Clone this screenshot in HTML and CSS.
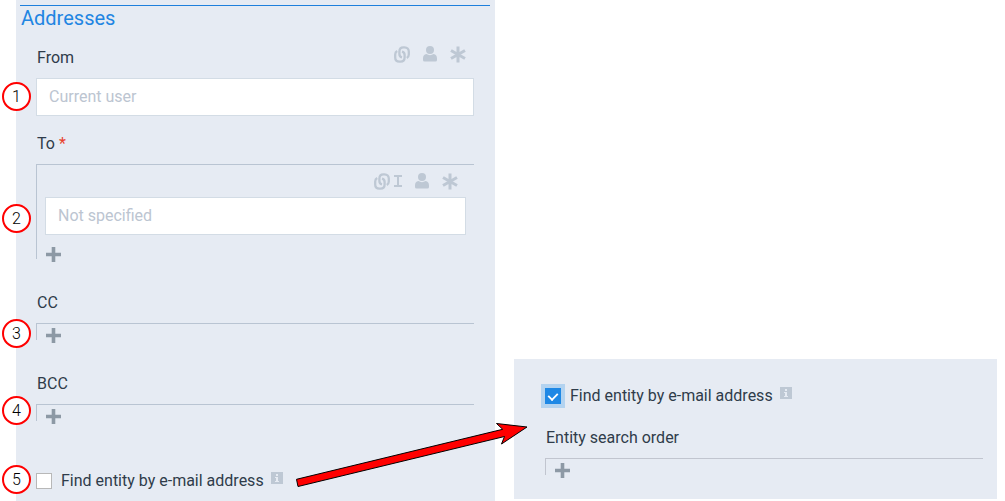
FILE: index.html
```html
<!DOCTYPE html>
<html lang="en">
<head>
<meta charset="utf-8">
<meta name="viewport" content="width=device-width, initial-scale=1">
<title>Addresses</title>
<link rel="stylesheet" href="styles.css">
</head>
<body>
<svg class="sprite" aria-hidden="true">
  <symbol id="link" viewBox="0 0 16 17">
    <g fill="none" stroke="currentColor" stroke-width="2.3">
      <path d="M3.200 5C1.800 5.800 1.200 7 1.200 8.500V11.500C1.200 14 2.800 15.700 5.500 15.700H6.500C9.200 15.700 10.600 14 10.600 11.500V9C10.600 7 9.800 6 8 5.600"/>
      <path d="M12.800 12C14.200 11.200 14.800 10 14.800 8.500V5.500C14.800 3 13.200 1.300 10.500 1.300H9.500C6.800 1.300 5.400 3 5.400 5.500V8C5.400 10 6.200 11 8 11.400"/>
    </g>
  </symbol>
  <symbol id="person" viewBox="0 0 14 16">
    <circle cx="7" cy="4" r="4" fill="currentColor"/>
    <path d="M3.500 8C5.500 9.500 8.500 9.500 10.500 8C13 8.500 14 10 14 12.500V14Q14 15.500 12.500 15.500H1.500Q0 15.500 0 14V12.500C0 10 1 8.500 3.500 8Z" fill="currentColor"/>
  </symbol>
  <symbol id="asterisk" viewBox="0 0 16 17">
    <path d="M8 .5V16.500M1 4.500L15 12.500M15 4.500L1 12.500" stroke="currentColor" stroke-width="3"/>
  </symbol>
  <symbol id="cursor" viewBox="0 0 8 12">
    <path d="M0 1H8M0 11H8M4 1V11" stroke="currentColor" stroke-width="2"/>
  </symbol>
  <symbol id="plus" viewBox="0 0 15 15">
    <path d="M7.500 0V15M0 7.500H15" stroke="currentColor" stroke-width="3.600"/>
  </symbol>
  <symbol id="info" viewBox="0 0 12 12">
    <rect width="12" height="12" fill="currentColor"/>
    <path d="M5 2H7V4H5ZM4 5H7V9H8V10H4V9H5V6H4Z" fill="#e6ebf3"/>
  </symbol>
</svg>

<main class="page">
  <section class="panel panel-main">
    <h1 class="title">Addresses</h1>

    <div class="field">
      <div class="field-head">
        <label class="label" for="from">From</label>
        <div class="tools">
          <button class="tool" type="button" aria-label="Link"><svg class="icon-large"><use href="#link"/></svg></button>
          <button class="tool" type="button" aria-label="User"><svg class="icon-person"><use href="#person"/></svg></button>
          <button class="tool" type="button" aria-label="Any"><svg class="icon-large"><use href="#asterisk"/></svg></button>
        </div>
      </div>
      <input class="text-box" id="from" type="text" placeholder="Current user">
    </div>

    <div class="field">
      <label class="label" for="to">To <span class="required">*</span></label>
      <div class="group">
        <div class="group-body">
          <div class="tools">
            <button class="tool" type="button" aria-label="Link to text"><svg class="icon-large"><use href="#link"/></svg><svg class="icon-cursor"><use href="#cursor"/></svg></button>
            <button class="tool" type="button" aria-label="User"><svg class="icon-person"><use href="#person"/></svg></button>
            <button class="tool" type="button" aria-label="Any"><svg class="icon-large"><use href="#asterisk"/></svg></button>
          </div>
          <input class="text-box" id="to" type="text" placeholder="Not specified">
        </div>
        <button class="add" type="button" aria-label="Add recipient"><svg class="icon-plus"><use href="#plus"/></svg></button>
      </div>
    </div>

    <div class="field field-spaced">
      <span class="label">CC</span>
      <div class="group">
        <button class="add" type="button" aria-label="Add CC"><svg class="icon-plus"><use href="#plus"/></svg></button>
      </div>
    </div>

    <div class="field field-spaced">
      <span class="label">BCC</span>
      <div class="group">
        <button class="add" type="button" aria-label="Add BCC"><svg class="icon-plus"><use href="#plus"/></svg></button>
      </div>
    </div>

    <div class="check-row">
      <input class="check" id="find" type="checkbox">
      <label class="check-label" for="find">Find entity by e-mail address</label>
      <svg class="icon-info"><use href="#info"/></svg>
    </div>
  </section>

  <section class="panel panel-detail">
    <div class="check-row">
      <input class="check" id="find-on" type="checkbox" checked>
      <label class="check-label" for="find-on">Find entity by e-mail address</label>
      <svg class="icon-info"><use href="#info"/></svg>
    </div>
    <div class="field">
      <span class="label">Entity search order</span>
      <div class="group group-gray">
        <button class="add" type="button" aria-label="Add entity"><svg class="icon-plus"><use href="#plus"/></svg></button>
      </div>
    </div>
  </section>

  <span class="marker marker-1">1</span>
  <span class="marker marker-2">2</span>
  <span class="marker marker-3">3</span>
  <span class="marker marker-4">4</span>
  <span class="marker marker-5">5</span>
  <svg class="arrow" viewBox="0 0 240 70" aria-hidden="true">
    <path d="M4.500 59.300L210.700 9.300L204.500 3.500L235 7L209.500 24L212.500 16.500L6 66.500Z"/>
  </svg>
</main>
</body>
</html>
```
FILE: styles.css
```css
* {
  box-sizing: border-box;
}

body {
  margin: 0;
  background: #fff;
  color: #2f3c4a;
  font: 16px/24px Roboto, "Liberation Sans", sans-serif;
}

.sprite {
  position: absolute;
  width: 0;
  height: 0;
}

.page {
  position: relative;
  display: grid;
  grid-template-columns: 479fr 483fr;
  gap: 19px;
  padding: 0 8px 0 16px;
}

.panel {
  background: #e6ebf3;
}

.panel-main {
  padding: 5px 21px 8px 20px;
}

.panel-detail {
  align-self: end;
  margin-bottom: 2px;
  padding: 25px 14px 24px 31px;
}

.title {
  margin: 0 -16px 16px;
  padding-left: 1px;
  border-top: 1px solid #1e7fdc;
  color: #2185e2;
  font-size: 20px;
  font-weight: 400;
  line-height: 24px;
}

.field {
  margin-bottom: 16px;
}

.field-spaced {
  margin-top: 32px;
}

.field-head {
  display: flex;
  justify-content: space-between;
}

.field-head .tools {
  align-self: flex-start;
}

.label {
  display: block;
  margin-bottom: 8px;
  padding-left: 1px;
}

.required {
  color: #e8412c;
}

.text-box {
  display: block;
  width: 100%;
  height: 38px;
  padding: 0 12px 2px;
  border: 1px solid #d3dce5;
  border-radius: 0;
  background: #fff;
  color: #2f3c4a;
  font: inherit;
}

.text-box::placeholder {
  color: #bcc5d1;
  opacity: 1;
}

.tools {
  display: flex;
  justify-content: flex-end;
  align-items: center;
  gap: 13px;
  height: 16px;
  padding-right: 8px;
  color: #bec8d4;
}

.tool {
  display: flex;
  align-items: center;
  gap: 4px;
  padding: 0;
  border: 0;
  background: none;
  color: inherit;
}

.icon-large {
  width: 16px;
  height: 17px;
}

.icon-person {
  width: 14px;
  height: 16px;
}

.icon-cursor {
  width: 8px;
  height: 12px;
}

.icon-plus {
  display: block;
  width: 15px;
  height: 15px;
}

.group {
  display: flow-root;
  border-top: 1px solid #b9c4d2;
  border-left: 1px solid #b9c4d2;
}

.group-gray {
  border-color: #c1c5cf;
}

.group-body {
  padding: 0 8px 8px;
}

.group-body .tools {
  height: 32px;
}

.add {
  display: block;
  margin: 0 0 -6px 9px;
  padding: 4px 0 3px;
  border: 0;
  background: none;
  color: #8d99a5;
}

.check-row {
  display: flex;
  align-items: center;
}

.panel-main .check-row {
  margin-top: 48px;
}

.panel-detail .check-row {
  margin-bottom: 18px;
}

.panel-detail .field {
  margin-bottom: 0;
}

.check {
  display: grid;
  place-content: center;
  appearance: none;
  width: 16px;
  height: 16px;
  margin: 0 9px 0 0;
  border: 1px solid #b8b8b8;
  background: #fff;
}

.check:checked {
  border-color: #1e88e5;
  background: #1e88e5;
  box-shadow: 0 0 0 4px #b3d3f0;
}

.check:checked::before {
  content: "";
  width: 8px;
  height: 5px;
  border: solid #fff;
  border-width: 0 0 2px 2px;
  transform: translateY(-1px) rotate(-45deg) scale(0.9);
}

.icon-info {
  width: 12px;
  height: 12px;
  margin: 0 0 6px 7px;
  color: #bec8d4;
}

.marker {
  position: absolute;
  left: 2px;
  width: 29px;
  height: 29px;
  border: 2px solid #f00;
  border-radius: 50%;
  background: #fff;
  color: #000;
  font-weight: 300;
  line-height: 25px;
  text-align: center;
}

.marker-1 {
  top: 82px;
}

.marker-2 {
  top: 204px;
}

.marker-3 {
  top: 319px;
}

.marker-4 {
  top: 396px;
}

.marker-5 {
  top: 465px;
}

.arrow {
  position: absolute;
  top: 420px;
  left: 292px;
  width: 240px;
  height: 70px;
  fill: #f00;
  stroke: #000;
  stroke-width: 1;
}
```
